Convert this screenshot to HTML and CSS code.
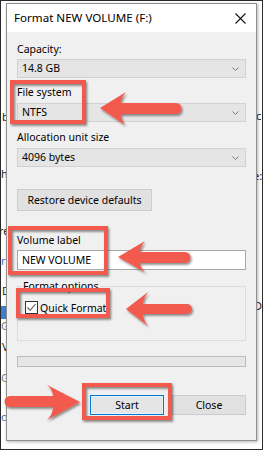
FILE: index.html
```html
<!DOCTYPE html>
<html>
<head>
<meta charset="utf-8">
<link rel="stylesheet" href="styles.css">
</head>
<body>
<div class="frame">
  <div class="backdrop">
    <span class="frag l1">b</span>
    <span class="frag l2">h</span>
    <span class="frag l3">re</span>
    <span class="frag l4">ri</span>
    <span class="frag l5">D</span>
    <span class="blue"></span>
    <span class="frag l6">G</span>
    <span class="frag l7">V</span>
    <span class="frag l8">G</span>
    <span class="frag l9">o</span>
    <span class="frag r1">c</span>
    <span class="frag r2">e:</span>
    <span class="frag r3">D</span>
  </div>
  <div class="dialog">
    <div class="titlebar">
      <span class="title">Format NEW VOLUME (F:)</span>
      <svg class="close" width="11" height="11" viewBox="0 0 11 11"><path d="M0.5 0.5L10.5 10.5M10.5 0.5L0.5 10.5" stroke="#111" stroke-width="1.1" fill="none"/></svg>
    </div>
    <div class="body">
      <div class="label first">Capacity:</div>
      <div class="combo"><span>14.8 GB</span><svg class="chev" width="7" height="4" viewBox="0 0 7 4"><path d="M0.5 0.5L3.5 3.5L6.5 0.5" stroke="#7a7a7a" stroke-width="1" fill="none"/></svg></div>
      <div class="label">File system</div>
      <div class="combo"><span>NTFS</span><svg class="chev" width="7" height="4" viewBox="0 0 7 4"><path d="M0.5 0.5L3.5 3.5L6.5 0.5" stroke="#7a7a7a" stroke-width="1" fill="none"/></svg></div>
      <div class="label l-alloc">Allocation unit size</div>
      <div class="combo"><span>4096 bytes</span><svg class="chev" width="7" height="4" viewBox="0 0 7 4"><path d="M0.5 0.5L3.5 3.5L6.5 0.5" stroke="#7a7a7a" stroke-width="1" fill="none"/></svg></div>
      <div class="restore">Restore device defaults</div>
      <div class="label l-vol">Volume label</div>
      <div class="textbox">NEW VOLUME</div>
      <fieldset class="group">
        <legend>Format options</legend>
        <div class="checkrow">
          <span class="checkbox"><svg width="11" height="11" viewBox="0 0 11 11"><path d="M1.5 5.5L4.2 8.3L9.6 2" stroke="#555" stroke-width="1.1" fill="none"/></svg></span>
          <span>Quick Format</span>
        </div>
      </fieldset>
      <div class="progress"></div>
      <div class="buttons">
        <div class="btn primary">Start</div>
        <div class="btn">Close</div>
      </div>
    </div>
  </div>
  <svg class="annot" width="263" height="450" viewBox="0 0 263 450">
    <defs>
      <filter id="sh" x="-20%" y="-20%" width="140%" height="160%">
        <feDropShadow dx="1.2" dy="1.8" stdDeviation="1.3" flood-color="#000" flood-opacity="0.45"/>
      </filter>
    </defs>
    <g filter="url(#sh)" fill="none" stroke="#f15a4e" stroke-width="4">
      <rect x="12" y="82" width="72" height="40"/>
      <rect x="10" y="228" width="96" height="45"/>
      <rect x="18" y="290" width="90" height="26"/>
      <rect x="84" y="385" width="86" height="33"/>
    </g>
    <g filter="url(#sh)" fill="#f15a4e">
      <path d="M100 108L126 92Q121 98 121 103L176 103A5.5 5.5 0 0 1 176 114L121 114Q121 119 125 125Z"/>
      <path d="M118 257L145 241Q140 247 140 252L185 252A5.5 5.5 0 0 1 185 263L140 263Q140 268 146 273Z"/>
      <path d="M126 309L148 292Q143 299 143 304L187 304A5 5 0 0 1 187 314L143 314Q143 320 148 326Z"/>
      <path d="M80 402L47 385Q53 390 53 396L10 396A5.5 5.5 0 0 0 10 407L53 407Q53 414 47 420Z"/>
    </g>
  </svg>
</div>
</body>
</html>
```
FILE: styles.css
```css
* { box-sizing: border-box; }
html, body { margin: 0; padding: 0; }
body { background: #fff; font-family: "Noto Sans", "Open Sans", sans-serif; font-size: 10.5px; color: #000; }
.frame {
  position: relative;
  width: 263px;
  height: 450px;
  border: 1px solid #2a2a2a;
  background: #fff;
  overflow: hidden;
}
.backdrop { position: absolute; inset: 0; }
.frag { position: absolute; font-size: 11px; line-height: 13px; color: #222; }
.l1 { left: 1px; top: 109px; }
.l2 { left: 0px; top: 166px; }
.l3 { left: -2px; top: 223px; }
.l4 { left: 0px; top: 253px; color: #3a6fc4; }
.l5 { left: 1px; top: 283px; }
.l6 { left: 0px; top: 318px; color: #777; }
.l7 { left: 1px; top: 339px; }
.l8 { left: 0px; top: 370px; color: #777; }
.l9 { left: 0px; top: 409px; color: #3a6fc4; }
.blue { position: absolute; left: 0; top: 305px; width: 6px; height: 13px; background: #3c7fd8; }
.r1 { left: 255px; top: 108px; }
.r2 { left: 252px; top: 168px; }
.r3 { left: 253px; top: 298px; }

.dialog {
  position: relative;
  margin: 2px 0 0 5px;
  width: 251px;
  height: 438px;
  border: 1px solid #8f8f8f;
  box-shadow: 1px 1px 3px rgba(0,0,0,0.3);
  display: flex;
  flex-direction: column;
  background: #f0f0f0;
}
.titlebar {
  height: 28px;
  background: #fff;
  display: flex;
  align-items: center;
  justify-content: space-between;
  padding: 0 10px 0 7px;
  flex: none;
}
.title { font-size: 11.6px; line-height: 14px; }
.close { display: block; }
.body {
  flex: 1;
  padding: 10px 10px 0 10px;
  display: flex;
  flex-direction: column;
}
.label { line-height: 15px; height: 15px; margin-top: 7px; }
.label.first { margin-top: 0; }
.label.l-alloc { margin-top: 8px; }
.label.l-vol { margin-top: 22px; }
.combo {
  margin-top: 3px;
  height: 19px;
  background: #e5e5e5;
  border: 1px solid #d2d2d2;
  display: flex;
  align-items: center;
  justify-content: space-between;
  padding: 0 6px 0 4px;
  line-height: 15px;
}
.first + .combo { margin-top: 2px; }
.chev { display: block; }
.restore {
  margin-top: 22px;
  width: 135px;
  height: 22px;
  background: #e1e1e1;
  border: 1px solid #cdcdcd;
  display: flex;
  align-items: center;
  justify-content: center;
}
.textbox {
  margin-top: 2px;
  height: 20px;
  background: #fff;
  border: 1px solid #a8a8a8;
  padding: 0 4px;
  line-height: 18px;
}
.group {
  margin: 9px 0 0 0;
  padding: 6px 8px 25px 7px;
  border: 1px solid #dcdcdc;
  min-width: 0;
}
.group legend {
  padding: 0 1px;
  margin-left: -3px;
  line-height: 15px;
}
.checkrow {
  display: flex;
  align-items: center;
  gap: 2px;
  height: 15px;
}
.checkbox {
  width: 13px;
  height: 13px;
  border: 1px solid #333;
  background: #fff;
  display: flex;
  align-items: center;
  justify-content: center;
}
.checkbox svg { display: block; }
.progress {
  margin-top: 15px;
  height: 11px;
  background: #e6e6e6;
  border: 1px solid #bcbcbc;
}
.buttons {
  margin-top: 28px;
  display: flex;
  justify-content: flex-end;
  gap: 8px;
}
.btn {
  width: 74px;
  height: 20px;
  background: #e1e1e1;
  border: 1px solid #cccccc;
  display: flex;
  align-items: center;
  justify-content: center;
}
.btn.primary { border: 1px solid #0078d7; box-shadow: inset 0 0 0 1px #e8f0f8; background: #e5e5e5; }
.annot { position: absolute; left: -1px; top: -1px; pointer-events: none; }
```
